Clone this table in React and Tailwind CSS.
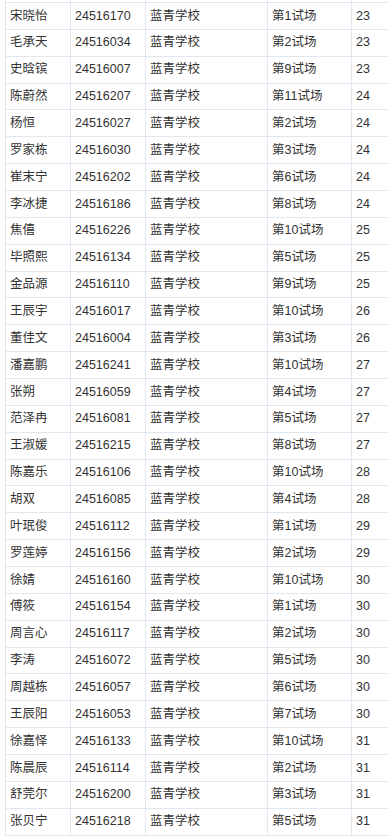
import React from 'react';

const rows = [
    ['宋晓怡', '24516170', '第1试场', '23'],
    ['毛承天', '24516034', '第2试场', '23'],
    ['史晗镔', '24516007', '第9试场', '23'],
    ['陈蔚然', '24516207', '第11试场', '24'],
    ['杨恒', '24516027', '第2试场', '24'],
    ['罗家栋', '24516030', '第3试场', '24'],
    ['崔末宁', '24516202', '第6试场', '24'],
    ['李冰捷', '24516186', '第8试场', '24'],
    ['焦僖', '24516226', '第10试场', '25'],
    ['毕照熙', '24516134', '第5试场', '25'],
    ['金品源', '24516110', '第9试场', '25'],
    ['王辰宇', '24516017', '第10试场', '26'],
    ['董佳文', '24516004', '第3试场', '26'],
    ['潘嘉鹏', '24516241', '第10试场', '27'],
    ['张朔', '24516059', '第4试场', '27'],
    ['范泽冉', '24516081', '第5试场', '27'],
    ['王淑媛', '24516215', '第8试场', '27'],
    ['陈嘉乐', '24516106', '第10试场', '28'],
    ['胡双', '24516085', '第4试场', '28'],
    ['叶珉俊', '24516112', '第1试场', '29'],
    ['罗莲婷', '24516156', '第2试场', '29'],
    ['徐婧', '24516160', '第10试场', '30'],
    ['傅筱', '24516154', '第1试场', '30'],
    ['周言心', '24516117', '第2试场', '30'],
    ['李涛', '24516072', '第5试场', '30'],
    ['周越栋', '24516057', '第6试场', '30'],
    ['王辰阳', '24516053', '第7试场', '30'],
    ['徐嘉怿', '24516133', '第10试场', '31'],
    ['陈晨辰', '24516114', '第2试场', '31'],
    ['舒莞尔', '24516200', '第3试场', '31'],
    ['张贝宁', '24516218', '第5试场', '31'],
];

// 成绩表格（截取片段）
export default function App() {
    const cell = 'border-l border-[#dfe7f1] pl-[4px] flex items-center';
    const grid = 'grid grid-cols-[65px_75px_122px_84px_1fr]';

    return (
        <div className="w-[388px] h-[840px] overflow-hidden bg-white pl-[5px] text-[12.5px] text-[#333] font-['Liberation_Sans','Noto_Sans_CJK_SC',sans-serif]">
            <div className="w-[420px]">
                {/* 上一行被截断的部分 */}
                <div className={`${grid} h-[3px] border-b border-[#dfe7f1]`}>
                    <div className="border-l border-[#dfe7f1]" />
                    <div className="border-l border-[#dfe7f1]" />
                    <div className="border-l border-[#dfe7f1]" />
                    <div className="border-l border-[#dfe7f1]" />
                    <div className="border-l border-[#dfe7f1]" />
                </div>
                {rows.map((r, i) => (
                    <div key={i} className={`${grid} h-[26.87px] border-b border-[#dfe7f1]`}>
                        <div className={cell}>{r[0]}</div>
                        <div className={cell}>{r[1]}</div>
                        <div className={cell}>蓝青学校</div>
                        <div className={cell}>{r[2]}</div>
                        <div className={cell}>{r[3]}</div>
                    </div>
                ))}
            </div>
        </div>
    );
}
